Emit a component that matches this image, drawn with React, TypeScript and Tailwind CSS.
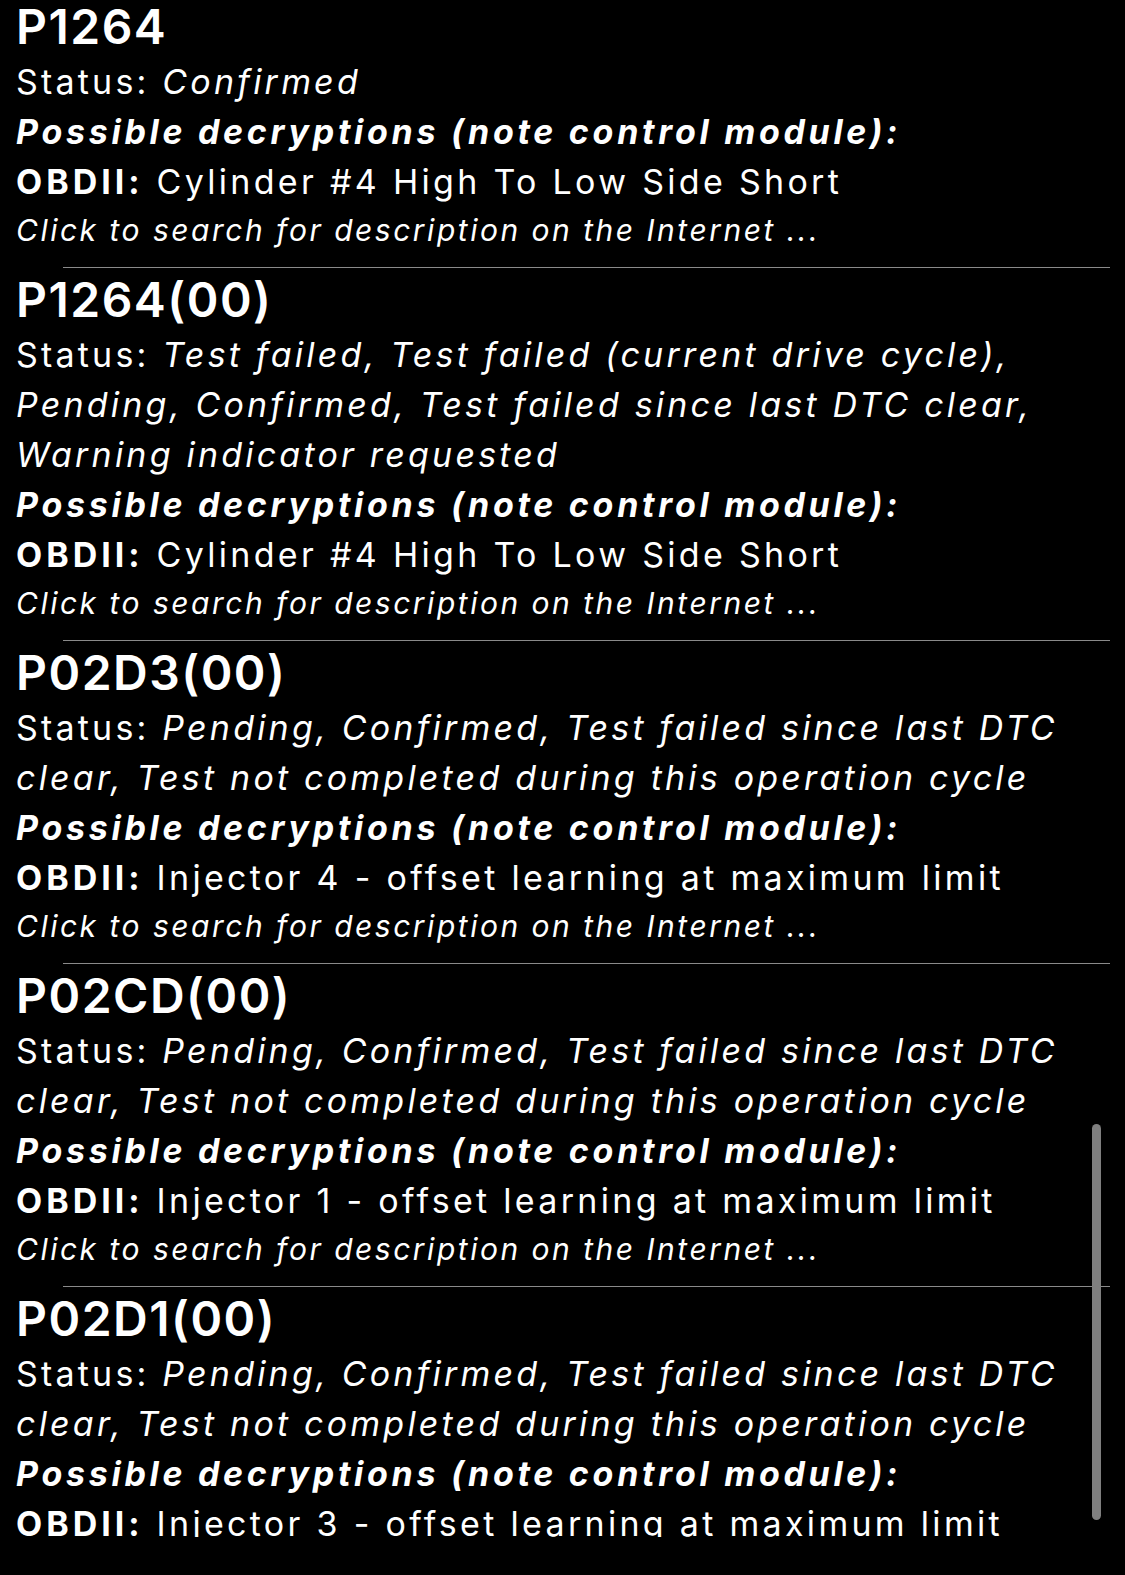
import React from 'react';

interface DtcEntry {
  code: string;
  status: string[];
  obd: string;
}

const entries: DtcEntry[] = [
  { code: 'P1264', status: ['Confirmed'], obd: 'Cylinder #4 High To Low Side Short' },
  {
    code: 'P1264(00)',
    status: [
      'Test failed, Test failed (current drive cycle),',
      'Pending, Confirmed, Test failed since last DTC clear,',
      'Warning indicator requested',
    ],
    obd: 'Cylinder #4 High To Low Side Short',
  },
  {
    code: 'P02D3(00)',
    status: ['Pending, Confirmed, Test failed since last DTC', 'clear, Test not completed during this operation cycle'],
    obd: 'Injector 4 - offset learning at maximum limit',
  },
  {
    code: 'P02CD(00)',
    status: ['Pending, Confirmed, Test failed since last DTC', 'clear, Test not completed during this operation cycle'],
    obd: 'Injector 1 - offset learning at maximum limit',
  },
  {
    code: 'P02D1(00)',
    status: ['Pending, Confirmed, Test failed since last DTC', 'clear, Test not completed during this operation cycle'],
    obd: 'Injector 3 - offset learning at maximum limit',
  },
];

function DtcBlock({ entry, last }: { entry: DtcEntry; last: boolean }) {
  return (
    <div>
      <div className="pt-[2px] pb-[14px] pl-[16px] text-white">
        <div className="text-[48px] leading-[60px] font-semibold tracking-[1.5px]">{entry.code}</div>
        {entry.status.map((line, i) => (
          <div key={i} className="text-[34px] leading-[50px] whitespace-nowrap tracking-[3.2px]">
            {i === 0 && <span className="not-italic">Status: </span>}
            <span className="italic">{line}</span>
          </div>
        ))}
        <div className="text-[34px] leading-[50px] font-bold italic whitespace-nowrap tracking-[3.7px]">
          Possible decryptions (note control module):
        </div>
        <div className="text-[34px] leading-[50px] whitespace-nowrap tracking-[3.3px]">
          <span className="font-bold tracking-[4px]">OBDII:</span> {entry.obd}
        </div>
        <div className="text-[30px] leading-[46px] italic tracking-[2.5px] whitespace-nowrap">
          Click to search for description on the Internet ...
        </div>
      </div>
      {!last && <div className="ml-[63px] mr-[15px] h-px bg-[#8a8a8a]" />}
    </div>
  );
}

export default function App() {
  return (
    <div className="w-[1125px] h-[1575px] bg-black" style={{ fontFamily: 'Inter, "Noto Sans", sans-serif' }}>
      <div className="relative h-[1537px] overflow-hidden">
        <div className="-mt-[5px]">
          {entries.map((e, i) => (
            <DtcBlock key={i} entry={e} last={i === entries.length - 1} />
          ))}
        </div>
        {/* scroll indicator */}
        <div className="absolute left-[1092px] top-[1124px] w-[9px] h-[396px] rounded-full bg-[#7f7f7f]" />
      </div>
    </div>
  );
}
